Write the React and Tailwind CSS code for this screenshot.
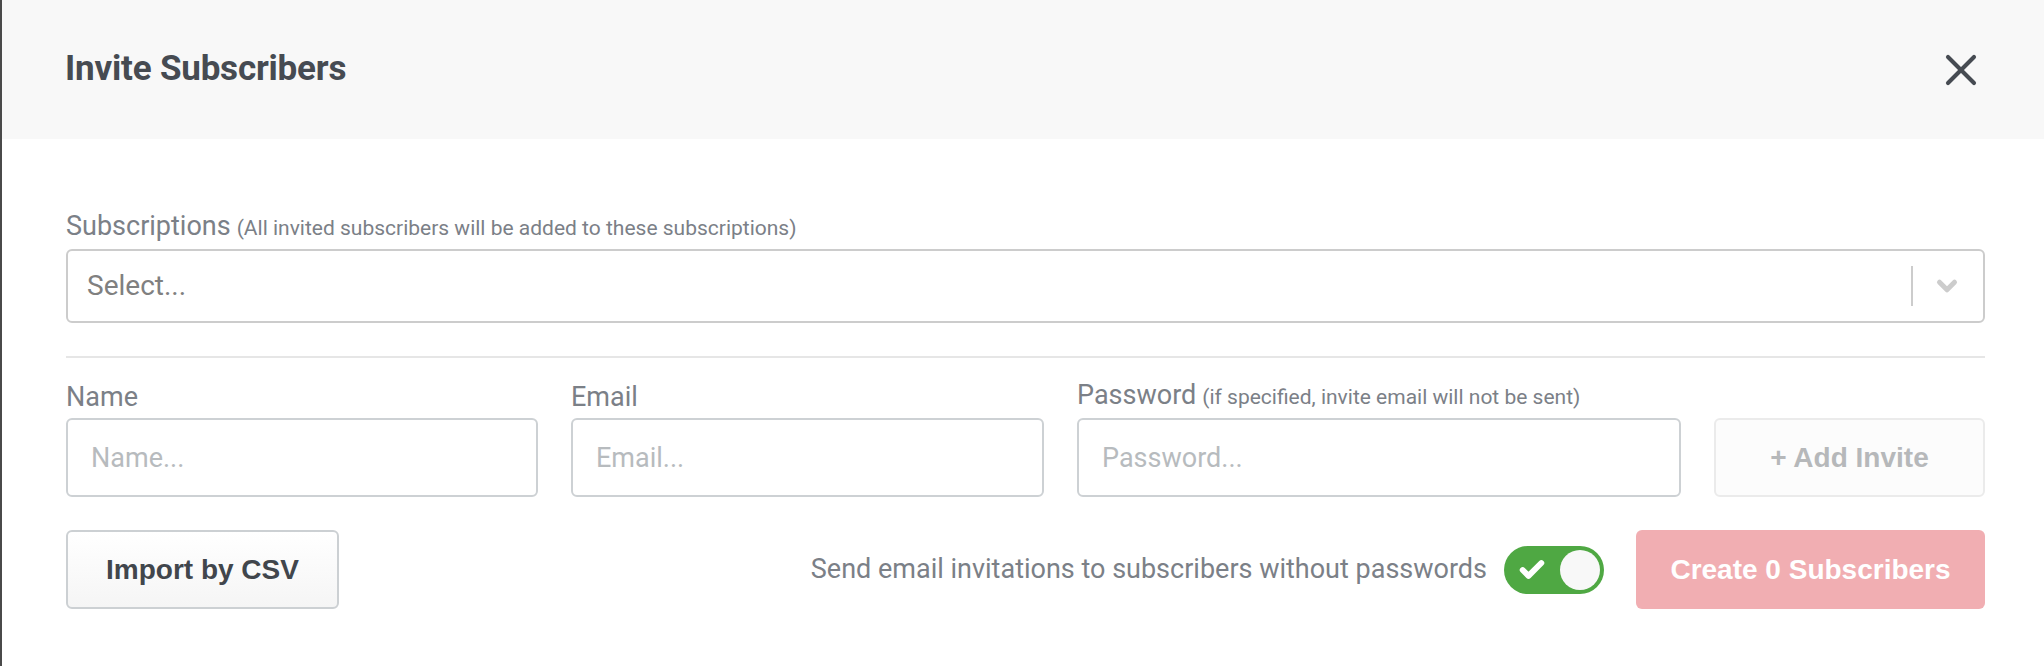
import { X, ChevronDown, Check } from "lucide-react";

const roboto = { fontFamily: "Roboto, 'Liberation Sans', sans-serif" };
const arial = { fontFamily: "'Liberation Sans', Arial, sans-serif" };

function Field({ label, hint, placeholder, className }) {
  return (
    <div className={`flex flex-col ${className}`}>
      <label className="text-[27px] leading-[30px] text-[#7b8087] mb-[6px] whitespace-nowrap">
        {label}
        {hint && <span className="text-[21px] ml-[6px]">{hint}</span>}
      </label>
      <input
        placeholder={placeholder}
        className="h-[79px] w-full border-2 border-[#cdd1d4] rounded-[6px] px-[23px] text-[27px] text-[#454a50] placeholder-[#b7bbbe] outline-none"
      />
    </div>
  );
}

export default function App() {
  return (
    <div
      className="w-[2044px] h-[666px] bg-white border-l-[2px] border-[#4a4a4a] flex flex-col"
      style={roboto}
    >
      {/* Header */}
      <div className="h-[139px] bg-[#f8f8f8] flex items-center justify-between pl-[63px] pr-[57px] shrink-0">
        <h2 className="text-[35px] font-bold text-[#464b52] tracking-[-0.2px]">Invite Subscribers</h2>
        <button className="text-[#464b52]">
          <X size={52} strokeWidth={1.9} />
        </button>
      </div>

      {/* Body */}
      <div className="pl-[64px] pr-[59px] pt-[72px]">
        <label className="block text-[27px] leading-[30px] text-[#7b8087] whitespace-nowrap">
          Subscriptions
          <span className="text-[21px] ml-[6px]">(All invited subscribers will be added to these subscriptions)</span>
        </label>
        <div className="mt-[6px] h-[74px] border-2 border-[#cccccc] rounded-[6px] flex items-center pl-[19px]">
          <span className="flex-1 text-[28px] text-[#808080]">Select...</span>
          <span className="w-[2px] h-[40px] bg-[#cccccc]" />
          <ChevronDown size={30} strokeWidth={4} className="text-[#cccccc] ml-[19px] mr-[21px]" />
        </div>

        <div className="mt-[33px] h-[2px] bg-[#e6e6e6]" />

        {/* Invite row */}
        <div className="mt-[22px] flex items-end gap-[33px]">
          <Field label="Name" placeholder="Name..." className="w-[472px]" />
          <Field label="Email" placeholder="Email..." className="w-[473px]" />
          <Field
            label="Password"
            hint="(if specified, invite email will not be sent)"
            placeholder="Password..."
            className="w-[604px]"
          />
          <button
            className="h-[79px] flex-1 border-2 border-[#ebebeb] rounded-[6px] bg-[#fcfcfc] text-[28px] font-bold text-[#b6b8ba]"
            style={arial}
          >
            + Add Invite
          </button>
        </div>

        {/* Bottom row */}
        <div className="mt-[33px] flex items-center">
          <button
            className="h-[79px] w-[273px] border-2 border-[#ccd0d3] rounded-[6px] bg-gradient-to-b from-white to-[#f5f5f5] text-[28px] font-bold text-[#41464c]"
            style={arial}
          >
            Import by CSV
          </button>
          <div className="flex-1" />
          <span className="text-[27px] text-[#7b8087] mr-[17px]">
            Send email invitations to subscribers without passwords
          </span>
          <div className="w-[100px] h-[48px] rounded-full bg-[#4fa843] flex items-center justify-between pl-[14px] pr-[4px] mr-[32px]">
            <Check size={28} strokeWidth={5} className="text-white" />
            <span className="w-[40px] h-[40px] rounded-full bg-[#f8f8f8]" />
          </div>
          <button
            className="h-[79px] w-[349px] rounded-[6px] bg-[#f1aeb2] text-[28px] font-bold text-white"
            style={arial}
          >
            Create 0 Subscribers
          </button>
        </div>
      </div>
    </div>
  );
}
